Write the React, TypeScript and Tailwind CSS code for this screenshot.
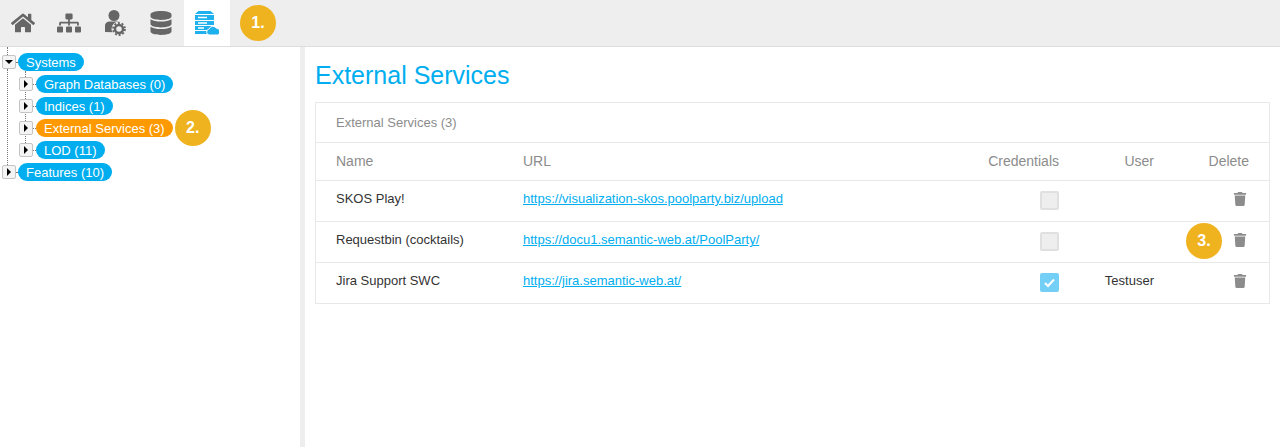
import * as React from "react";
import { FaDatabase, FaHome, FaSitemap, FaTrash } from "react-icons/fa";

const Badge = ({ label, className = "" }: { label: string; className?: string }) => (
  <span
    className={`flex h-9 w-9 shrink-0 items-center justify-center rounded-full bg-[#efb31f] text-[16px] font-bold text-white ${className}`}
  >
    {label}
  </span>
);

const UserGear = () => (
  <svg width="22" height="26" viewBox="0 0 22 26">
    <circle cx="10" cy="5.500" r="5.500" fill="#666666" />
    <path d="M1 22v-6.500C1 13 3.500 11.500 6 11.500h8c2 0 3.500 1 4 2.500v8.500z" fill="#666666" />
    <circle cx="15" cy="19" r="7.500" fill="#eeeeee" />
    <circle cx="15" cy="19" r="4" fill="none" stroke="#666666" strokeWidth="2.500" />
    <circle cx="15" cy="19" r="6" fill="none" stroke="#666666" strokeWidth="1.800" strokeDasharray="2 1.770" />
  </svg>
);

const ServerCloud = () => (
  <svg width="24" height="24" viewBox="0 0 24 24">
    <path d="M3.500 0h12L19 3v19.500a.5.5 0 0 1-.5.500H.5a.5.5 0 0 1-.5-.5V3z" fill="#1eb1ee" />
    <path d="M0 3.500h19M0 9.500h19M0 14.500h19M0 19.500h19" stroke="#fff" strokeWidth="1" />
    <path d="M3 6.500h9M3 12h9M3 17h6" stroke="#fff" strokeWidth="1.500" />
    <path
      d="M14.500 24a3 3 0 0 1-.6-5.900 4.500 4.500 0 0 1 7.800-.8 3.400 3.400 0 0 1 .8 6.700z"
      fill="#1eb1ee"
      stroke="#fff"
      strokeWidth="1"
    />
  </svg>
);

const Toggle = ({ open }: { open?: boolean }) => (
  <span className="relative z-10 flex h-[14px] w-[14px] shrink-0 items-center justify-center rounded-[2px] border border-[#c4c4c4] bg-[#f4f4f4]">
    {open ? (
      <span className="border-x-[4px] border-t-[4px] border-x-transparent border-t-black" />
    ) : (
      <span className="border-y-[4px] border-l-[4px] border-y-transparent border-l-black" />
    )}
  </span>
);

const TreeRow = ({
  label,
  open,
  active,
  nested,
  children,
}: {
  label: string;
  open?: boolean;
  active?: boolean;
  nested?: boolean;
  children?: React.ReactNode;
}) => (
  <div className={`flex h-[22px] items-center ${nested ? "pl-[19px]" : "pl-[2px]"}`}>
    <Toggle open={open} />
    <span className={`border-t border-dotted border-[#777] ${nested ? "w-[3px]" : "w-[2px]"}`} />
    <span
      className={`flex h-[18px] items-center rounded-full px-2 pt-[1px] text-[13px] text-white ${
        active ? "bg-[#ff9900]" : "bg-[#00aeef]"
      }`}
    >
      {label}
    </span>
    {children}
  </div>
);

const rows = [
  { name: "SKOS Play!", url: "https://visualization-skos.poolparty.biz/upload" },
  { name: "Requestbin (cocktails)", url: "https://docu1.semantic-web.at/PoolParty/", badge: true },
  { name: "Jira Support SWC", url: "https://jira.semantic-web.at/", checked: true, user: "Testuser" },
];

const App = () => {
  return (
    <div className="flex h-[447px] w-[1280px] flex-col overflow-hidden bg-white font-['Liberation_Sans',sans-serif]">
      <header className="flex h-[47px] shrink-0 items-center border-b border-[#dedede] bg-[#eeeeee] text-[#666666]">
        <div className="flex h-[46px] w-[46px] items-center justify-center">
          <FaHome size={24} />
        </div>
        <div className="flex h-[46px] w-[46px] items-center justify-center">
          <FaSitemap size={24} />
        </div>
        <div className="flex h-[46px] w-[46px] items-center justify-center">
          <UserGear />
        </div>
        <div className="flex h-[46px] w-[46px] items-center justify-center">
          <FaDatabase size={24} />
        </div>
        <div className="flex h-[46px] w-[46px] items-center justify-center bg-white">
          <ServerCloud />
        </div>
        <Badge label="1." className="ml-[10px]" />
      </header>

      <div className="flex min-h-0 flex-1">
        <aside className="relative w-[300px] shrink-0 pt-[4px]">
          <div className="absolute left-[7px] top-0 h-[8px] border-l border-dotted border-[#777]" />
          <div className="absolute left-[7px] top-[22px] h-[96px] border-l border-dotted border-[#777]" />
          <div className="absolute left-[25px] top-[24px] h-[72px] border-l border-dotted border-[#777]" />
          <TreeRow label="Systems" open />
          <TreeRow label="Graph Databases (0)" nested />
          <TreeRow label="Indices (1)" nested />
          <TreeRow label="External Services (3)" nested active>
            <Badge label="2." className="ml-[2px]" />
          </TreeRow>
          <TreeRow label="LOD (11)" nested />
          <TreeRow label="Features (10)" />
        </aside>
        <div className="w-[5px] shrink-0 bg-[#eeeeee]" />

        <main className="min-w-0 flex-1 px-[10px]">
          <h1 className="mt-[13px] h-[42px] text-[25px] leading-[30px] text-[#00aeef]">External Services</h1>
          <section className="border border-[#e8e8e8] text-[13px] text-[#333333]">
            <div className="flex h-[40px] items-center border-b border-[#e8e8e8] pl-[20px] text-[#8c8c8c]">
              External Services (3)
            </div>
            <div className="flex h-[37px] items-center pr-[20px] pl-[20px] text-[14px] text-[#8c8c8c]">
              <span className="w-[187px]">Name</span>
              <span className="flex-1">URL</span>
              <span className="w-[80px] text-right">Credentials</span>
              <span className="w-[95px] text-right">User</span>
              <span className="w-[95px] text-right">Delete</span>
            </div>
            {rows.map((row) => (
              <div key={row.name} className="flex h-[41px] items-center border-t border-[#e8e8e8] pl-[20px] pr-[20px]">
                <span className="w-[187px] pb-[4px]">{row.name}</span>
                <a href="#" className="flex-1 pb-[4px] text-[#00aeef] underline">
                  {row.url}
                </a>
                <span className="flex w-[80px] justify-end pb-[1px]">
                  {row.checked ? (
                    <span className="flex h-[19px] w-[19px] items-center justify-center rounded-[2px] bg-[#74cff7]">
                      <svg width="13" height="13" viewBox="0 0 13 13">
                        <path d="M2 7l3 3 6-6.500" fill="none" stroke="#fff" strokeWidth="2" />
                      </svg>
                    </span>
                  ) : (
                    <span className="h-[19px] w-[19px] rounded-[2px] border-2 border-[#e0e0e0] bg-[#eeeeee]" />
                  )}
                </span>
                <span className="w-[95px] pb-[4px] text-right">{row.user}</span>
                <span className="relative flex w-[95px] justify-end pr-[2px] pb-[4px] text-[#8c8c8c]">
                  {row.badge && <Badge label="3." className="absolute right-[27px] top-[-10px]" />}
                  <FaTrash size={14} />
                </span>
              </div>
            ))}
          </section>
        </main>
      </div>
    </div>
  );
};

export default App;
